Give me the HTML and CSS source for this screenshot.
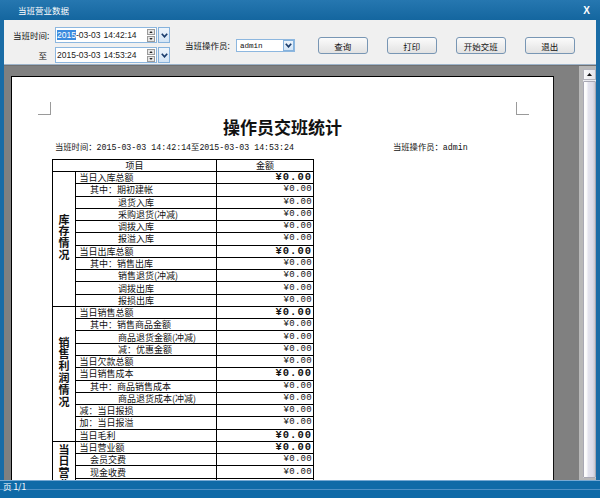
FILE: index.html
```html
<!DOCTYPE html>
<html lang="zh-CN">
<head>
<meta charset="utf-8">
<title>当班营业数据</title>
<link rel="stylesheet" href="styles.css">
</head>
<body>
<div class="window">
  <header class="titlebar">
    <span class="title">当班营业数据</span>
    <span class="close">X</span>
  </header>
  <div class="frame">
    <div class="toolbar">
      <div class="timegrid">
        <span class="lbl lbl-first">当班时间:</span>
        <div class="dt">
          <div class="dt-box">
            <span class="dt-text"><span class="sel">2015</span>-03-03</span><span class="dt-time">14:42:14</span>
            <span class="spin"><i class="sp sp-up"><svg viewBox="0 0 5 3" width="5" height="3"><path d="M0 3 L2.5 0 L5 3 Z"/></svg></i><i class="sp sp-dn"><svg viewBox="0 0 5 3" width="5" height="3"><path d="M0 0 L2.5 3 L5 0 Z"/></svg></i></span>
          </div>
          <span class="dd"><svg viewBox="0 0 7 5" width="7" height="5"><polyline points="0.8,0.8 3.5,3.8 6.2,0.8"/></svg></span>
        </div>
        <span class="lbl lbl-to">至</span>
        <div class="dt">
          <div class="dt-box">
            <span class="dt-text">2015-03-03</span><span class="dt-time">14:53:24</span>
            <span class="spin"><i class="sp sp-up"><svg viewBox="0 0 5 3" width="5" height="3"><path d="M0 3 L2.5 0 L5 3 Z"/></svg></i><i class="sp sp-dn"><svg viewBox="0 0 5 3" width="5" height="3"><path d="M0 0 L2.5 3 L5 0 Z"/></svg></i></span>
          </div>
          <span class="dd"><svg viewBox="0 0 7 5" width="7" height="5"><polyline points="0.8,0.8 3.5,3.8 6.2,0.8"/></svg></span>
        </div>
      </div>
      <span class="lbl op-lbl">当班操作员:</span>
      <div class="select">
        <span class="sel-text">admin</span>
        <span class="dd dd-small"><svg viewBox="0 0 7 5" width="7" height="5"><polyline points="0.8,0.8 3.5,3.8 6.2,0.8"/></svg></span>
      </div>
      <div class="buttons">
        <button class="btn">查询</button>
        <button class="btn">打印</button>
        <button class="btn">开始交班</button>
        <button class="btn">退出</button>
      </div>
    </div>
    <div class="preview">
      <div class="canvas">
        <div class="page">
          <div class="marks"><span class="mark mark-l"></span><span class="mark mark-r"></span></div>
          <h1 class="rtitle">操作员交班统计</h1>
          <div class="subrow"><span class="sub-left">当班时间：2015-03-03 14:42:14至2015-03-03 14:53:24</span><span class="sub-right">当班操作员：admin</span></div>
          <table class="report">
            <colgroup><col class="c-grp"><col class="c-item"><col class="c-amt"></colgroup>
            <thead><tr><th colspan="2">项目</th><th>金额</th></tr></thead>
            <tbody>
              <tr><td class="grp" rowspan="11"><span class="vt">库存情况</span></td><td class="l0">当日入库总额</td><td class="amt b">¥0.00</td></tr>
              <tr><td class="l1">其中：期初建帐</td><td class="amt">¥0.00</td></tr>
              <tr><td class="l2">退货入库</td><td class="amt">¥0.00</td></tr>
              <tr><td class="l2">采购退货(冲减)</td><td class="amt">¥0.00</td></tr>
              <tr><td class="l2">调拨入库</td><td class="amt">¥0.00</td></tr>
              <tr><td class="l2">报溢入库</td><td class="amt">¥0.00</td></tr>
              <tr><td class="l0">当日出库总额</td><td class="amt b">¥0.00</td></tr>
              <tr><td class="l1">其中：销售出库</td><td class="amt">¥0.00</td></tr>
              <tr><td class="l2">销售退货(冲减)</td><td class="amt">¥0.00</td></tr>
              <tr><td class="l2">调拨出库</td><td class="amt">¥0.00</td></tr>
              <tr><td class="l2">报损出库</td><td class="amt">¥0.00</td></tr>
              <tr><td class="grp" rowspan="11"><span class="vt">销售利润情况</span></td><td class="l0">当日销售总额</td><td class="amt b">¥0.00</td></tr>
              <tr><td class="l1">其中：销售商品金额</td><td class="amt">¥0.00</td></tr>
              <tr><td class="l2">商品退货金额(冲减)</td><td class="amt">¥0.00</td></tr>
              <tr><td class="l2">减：优惠金额</td><td class="amt">¥0.00</td></tr>
              <tr><td class="l0">当日欠款总额</td><td class="amt">¥0.00</td></tr>
              <tr><td class="l0">当日销售成本</td><td class="amt b">¥0.00</td></tr>
              <tr><td class="l1">其中：商品销售成本</td><td class="amt">¥0.00</td></tr>
              <tr><td class="l2">商品退货成本(冲减)</td><td class="amt">¥0.00</td></tr>
              <tr><td class="l0">减：当日报损</td><td class="amt">¥0.00</td></tr>
              <tr><td class="l0">加：当日报溢</td><td class="amt">¥0.00</td></tr>
              <tr><td class="l0">当日毛利</td><td class="amt b">¥0.00</td></tr>
              <tr><td class="grp grp-top" rowspan="8"><span class="vt">当日营业情况</span></td><td class="l0">当日营业额</td><td class="amt b">¥0.00</td></tr>
              <tr><td class="l1">会员交费</td><td class="amt">¥0.00</td></tr>
              <tr><td class="l1">现金收费</td><td class="amt">¥0.00</td></tr>
              <tr><td class="l1">刷卡收费</td><td class="amt">¥0.00</td></tr>
              <tr><td class="l1">储值卡收费</td><td class="amt">¥0.00</td></tr>
              <tr><td class="l1">其它收费</td><td class="amt">¥0.00</td></tr>
              <tr><td class="l1">优惠金额</td><td class="amt">¥0.00</td></tr>
              <tr><td class="l0">当日费用</td><td class="amt b">¥0.00</td></tr>
            </tbody>
          </table>
        </div>
      </div>
      <div class="scrollbar">
        <div class="sb-inner">
          <span class="sb-up"><svg viewBox="0 0 5 3" width="5" height="3"><path d="M0 3 L2.5 0 L5 3 Z"/></svg></span>
          <span class="sb-thumb"></span>
        </div>
      </div>
    </div>
  </div>
  <footer class="statusbar">页 1/1</footer>
</div>
</body>
</html>
```

FILE: styles.css
```css
* { box-sizing: border-box; margin: 0; padding: 0; }
html, body { width: 600px; height: 498px; overflow: hidden; }
body {
  font-family: "Liberation Sans", "Noto Sans CJK SC", sans-serif;
  background: #1a6ca6;
  color: #000;
}
.window {
  width: 600px;
  height: 498px;
  display: flex;
  flex-direction: column;
  background: #1a6ca6;
}

/* title bar */
.titlebar {
  height: 20px;
  flex: none;
  display: flex;
  align-items: center;
  justify-content: space-between;
  padding: 0 10px 0 18px;
  color: #fff;
  background: linear-gradient(#2677b0, #14669f);
}
.title { font-size: 8.5px; font-family: "Noto Sans CJK SC", sans-serif; line-height: 12px; }
.close { font-size: 10px; font-weight: bold; font-family: "Liberation Sans", sans-serif; }

.frame {
  flex: 1;
  padding: 0 4px;
  display: flex;
  flex-direction: column;
  min-height: 0;
}

/* toolbar */
.toolbar {
  height: 45px;
  flex: none;
  background: #f0f0f0;
  border-bottom: 1px solid #9db3c9;
  display: flex;
  align-items: flex-start;
}
.lbl { font-size: 8.5px; line-height: 12px; font-family: "Noto Sans CJK SC", sans-serif; color: #111; }
.timegrid {
  margin-top: 7px;
  display: grid;
  grid-template-columns: 51px auto;
  row-gap: 4px;
  align-items: center;
}
.lbl-first { padding-left: 9px; }
.lbl-to { justify-self: end; margin-right: 8px; }
.dt { display: flex; align-items: center; }
.dt-box {
  width: 102px;
  height: 16px;
  border: 1px solid #8db7df;
  background: #fff;
  display: flex;
  align-items: center;
  padding-left: 1px;
  font-size: 8.5px;
  line-height: 12px;
  color: #222;
}
.sel { background: #3a8ade; color: #fff; }
.dt-time { margin-left: 3px; }
.spin {
  margin-left: auto;
  margin-right: 1px;
  width: 8px;
  height: 13px;
  display: flex;
  flex-direction: column;
  gap: 1px;
}
.sp {
  flex: 1;
  display: flex;
  align-items: center;
  justify-content: center;
  border: 1px solid #9a9a9a;
  background: #e6e6e6;
}
.sp svg { width: 4px; height: 2px; fill: #222; }
.dd {
  margin-left: 1px;
  width: 12px;
  height: 16px;
  border: 1px solid #86b2dc;
  background: linear-gradient(#eef5fc, #d3e4f5);
  display: flex;
  align-items: center;
  justify-content: center;
}
.dd svg { fill: none; stroke: #1b3d6d; stroke-width: 1.7; }
.op-lbl { margin-left: 15px; margin-top: 19px; }
.select {
  margin-left: 6px;
  margin-top: 19px;
  width: 59px;
  height: 13px;
  border: 1px solid #8db7df;
  background: #fff;
  display: flex;
  align-items: center;
  padding-left: 3px;
}
.sel-text { font-family: "Liberation Mono", monospace; font-size: 7.6px; line-height: 10px; color: #111; }
.dd-small { margin-left: auto; width: 11px; height: 11px; }
.buttons {
  margin-left: 23px;
  margin-top: 17px;
  display: flex;
  gap: 19px;
}
.btn {
  width: 50px;
  height: 17px;
  border: 1px solid #7896b4;
  border-radius: 3px;
  background: linear-gradient(#fbfbfb, #e2e2e2);
  font-family: "Noto Sans CJK SC", sans-serif;
  font-size: 8.5px;
  line-height: 12px;
  color: #111;
}

/* preview */
.preview {
  flex: 1;
  min-height: 0;
  display: flex;
}
.canvas {
  flex: 1;
  background: #808080;
  overflow: hidden;
  padding: 10px 0 0 7px;
  border-top: 1px solid #707070;
}
.page {
  width: 543px;
  min-height: 700px;
  background: #fff;
  border: 1px solid #000;
  border-right-color: #111;
}
.marks {
  display: flex;
  justify-content: space-between;
  padding: 25px 24px 0 26px;
}
.mark { width: 13px; height: 13px; border-bottom: 1px solid #9a9a9a; }
.mark-l { border-right: 1px solid #9a9a9a; }
.mark-r { border-left: 1px solid #9a9a9a; }
.rtitle {
  font-family: "Noto Sans CJK SC", sans-serif;
  font-size: 17px;
  font-weight: bold;
  line-height: 22px;
  text-align: center;
  margin-top: 1px;
  color: #111;
}
.subrow {
  margin-top: 4px;
  padding-left: 43px;
  display: flex;
  font-family: "Liberation Mono", "Noto Sans CJK SC", monospace;
  font-size: 8.3px;
  line-height: 12px;
  color: #111;
}
.sub-left { width: 338px; flex: none; white-space: nowrap; }
.sub-right { white-space: nowrap; }

.report {
  margin: 5px 0 0 40px;
  width: 262px;
  table-layout: fixed;
  border-collapse: collapse;
  font-family: "Noto Sans CJK SC", sans-serif;
  font-size: 9px;
  line-height: 11px;
  color: #111;
}
.c-grp { width: 23px; }
.c-item { width: 141px; }
.report th, .report td {
  border: 1px solid #000;
  padding: 0;
  white-space: nowrap;
  overflow: hidden;
}
.report thead tr { height: 12px; }
.report tbody tr { height: 12.27px; }
.report th { font-weight: normal; text-align: center; }
.l0 { padding-left: 3.5px !important; }
.l1 { padding-left: 14px !important; }
.l2 { padding-left: 42px !important; }
.amt {
  text-align: right;
  padding-right: 1px !important;
  font-family: "Liberation Mono", monospace;
  font-size: 9px;
  letter-spacing: 0.3px;
}
.amt.b { font-weight: bold; font-size: 10.5px; letter-spacing: 1px; }
.report td.grp {
  text-align: center;
  vertical-align: middle;
  font-weight: bold;
  font-size: 11px;
  line-height: 14px;
}
.report td.grp-top { vertical-align: top; padding-top: 2px; }
.vt {
  display: inline-block;
  writing-mode: vertical-rl;
  text-orientation: upright;
  letter-spacing: 0.8px;
}

/* scrollbar */
.scrollbar {
  width: 17px;
  flex: none;
  background: #b8b8b8;
  padding: 3px 0 2px 4px;
  border-top: 1px solid #707070;
}
.sb-inner {
  height: 100%;
  display: flex;
  flex-direction: column;
  gap: 1px;
  background: #ececf0;
}
.sb-up {
  height: 11px;
  display: flex;
  align-items: center;
  justify-content: center;
  background: linear-gradient(to right, #fafafa, #e4e4ea);
  border: 1px solid #b4b4bc;
}
.sb-up svg { fill: #111; }
.sb-thumb {
  flex: 1;
  border: 1px solid #a9a9b4;
  border-radius: 1px;
  background: linear-gradient(to right, #fdfdfd 0, #fdfdfd 20%, #e4e4ee 40%, #dcdce8 80%, #c8c8d0 100%);
}

/* status bar */
.statusbar {
  height: 18px;
  flex: none;
  padding: 1px 0 0 3px;
  color: #fff;
  font-family: "Noto Sans CJK SC", sans-serif;
  font-size: 8.5px;
  line-height: 10px;
  background: linear-gradient(to bottom, #77a9d3 0, #77a9d3 1px, #0f6aa7 1px, #0f6aa7 9px, #4d8fc4 9px, #4d8fc4 10px, #0f6aa7 10px, #0f6aa7 100%);
}
```
